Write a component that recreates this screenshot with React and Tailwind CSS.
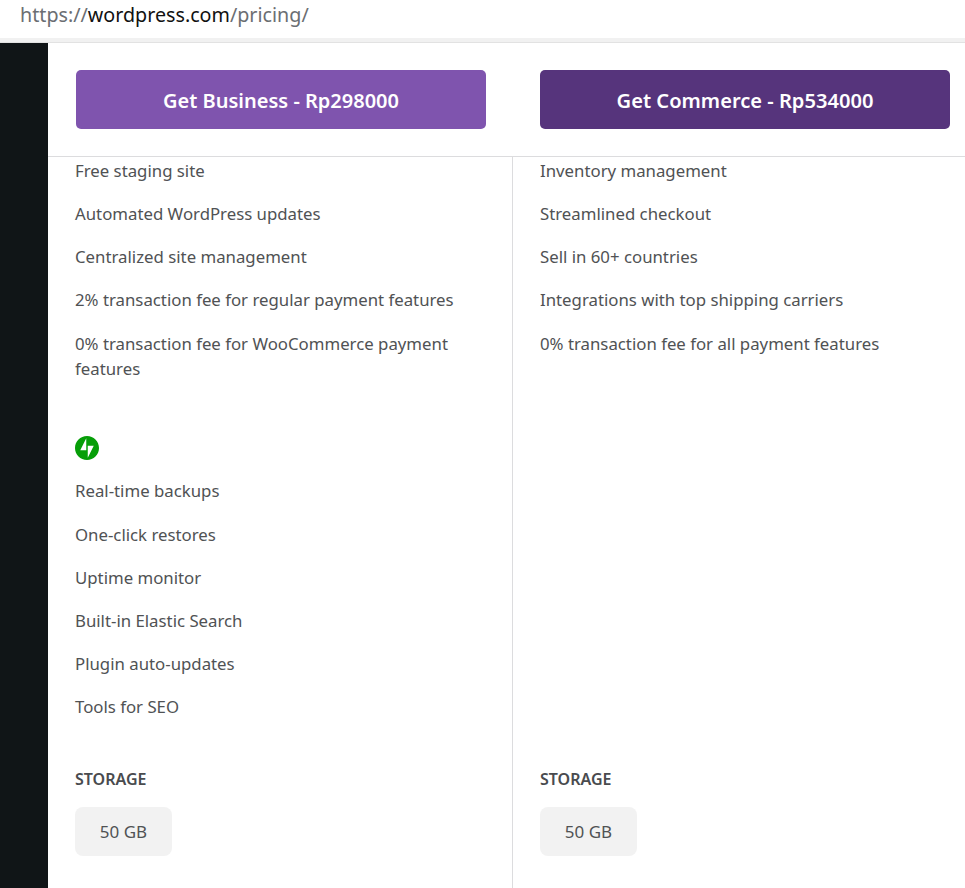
const businessFeatures = [
  "Free staging site",
  "Automated WordPress updates",
  "Centralized site management",
  "2% transaction fee for regular payment features",
  "0% transaction fee for WooCommerce payment features",
];

const jetpackFeatures = [
  "Real-time backups",
  "One-click restores",
  "Uptime monitor",
  "Built-in Elastic Search",
  "Plugin auto-updates",
  "Tools for SEO",
];

const commerceFeatures = [
  "Inventory management",
  "Streamlined checkout",
  "Sell in 60+ countries",
  "Integrations with top shipping carriers",
  "0% transaction fee for all payment features",
];

function FeatureList({ items }) {
  return (
    <ul className="flex flex-col gap-[18.2px]">
      {items.map((item) => (
        <li key={item} className="text-[16.8px] leading-[25px] text-[#505254]">
          {item}
        </li>
      ))}
    </ul>
  );
}

function Storage() {
  return (
    <div>
      <h4 className="text-[16px] leading-[22px] font-semibold text-[#494b4e]">STORAGE</h4>
      <div className="mt-[17px] flex h-[49px] w-[97px] items-center justify-center rounded-lg bg-[#f2f2f2] text-[17px] text-[#505254]">
        50 GB
      </div>
    </div>
  );
}

function JetpackIcon() {
  return (
    <svg width="24" height="24" viewBox="0 0 32 32" className="block">
      <path
        fill="#069e08"
        d="M16 0C7.2 0 0 7.2 0 16s7.2 16 16 16 16-7.2 16-16S24.8 0 16 0zM15 19H7l8-16v16zm2 10V13h8l-8 16z"
      />
    </svg>
  );
}

export default function App() {
  return (
    <div className="flex h-[888px] w-[965px] flex-col overflow-hidden bg-white font-['Noto_Sans',sans-serif]">
      <div className="flex h-[38px] items-center pb-2 pl-5 text-[19.7px] text-[#6b6e72]">
        https://<span className="text-[#111]">wordpress.com</span>/pricing/
      </div>
      <div className="h-[5px] border-b border-[#e2e2e2] bg-[#f1f1f1]" />

      <div className="flex min-h-0 flex-1">
        <aside className="w-12 shrink-0 bg-[#101517]" />

        <main className="flex min-w-0 flex-1 flex-col">
          <div className="flex h-[114px] shrink-0 border-b border-[#dcdcde] pt-[27px]">
            <div className="w-[465px] shrink-0 pl-7">
              <button className="h-[59px] w-[410px] rounded-[5px] bg-[#7f54ae] pt-[2px] text-[20px] font-semibold text-white">
                Get Business - Rp298000
              </button>
            </div>
            <div className="pl-[27px]">
              <button className="h-[59px] w-[410px] rounded-[5px] bg-[#56347c] pt-[3px] text-[20.1px] font-semibold text-white">
                Get Commerce - Rp534000
              </button>
            </div>
          </div>

          <div className="flex min-h-0 flex-1">
            <section className="flex w-[465px] shrink-0 flex-col border-r border-[#dcdcde] pl-[27px] pr-8 pt-[0.8px]">
              <FeatureList items={businessFeatures} />
              <div className="mt-[55px]">
                <JetpackIcon />
              </div>
              <div className="mt-[18.8px]">
                <FeatureList items={jetpackFeatures} />
              </div>
              <div className="mt-auto pb-[32px]">
                <Storage />
              </div>
            </section>

            <section className="flex flex-1 flex-col pl-[27px] pt-[0.8px]">
              <FeatureList items={commerceFeatures} />
              <div className="mt-auto pb-[32px]">
                <Storage />
              </div>
            </section>
          </div>
        </main>
      </div>
    </div>
  );
}
